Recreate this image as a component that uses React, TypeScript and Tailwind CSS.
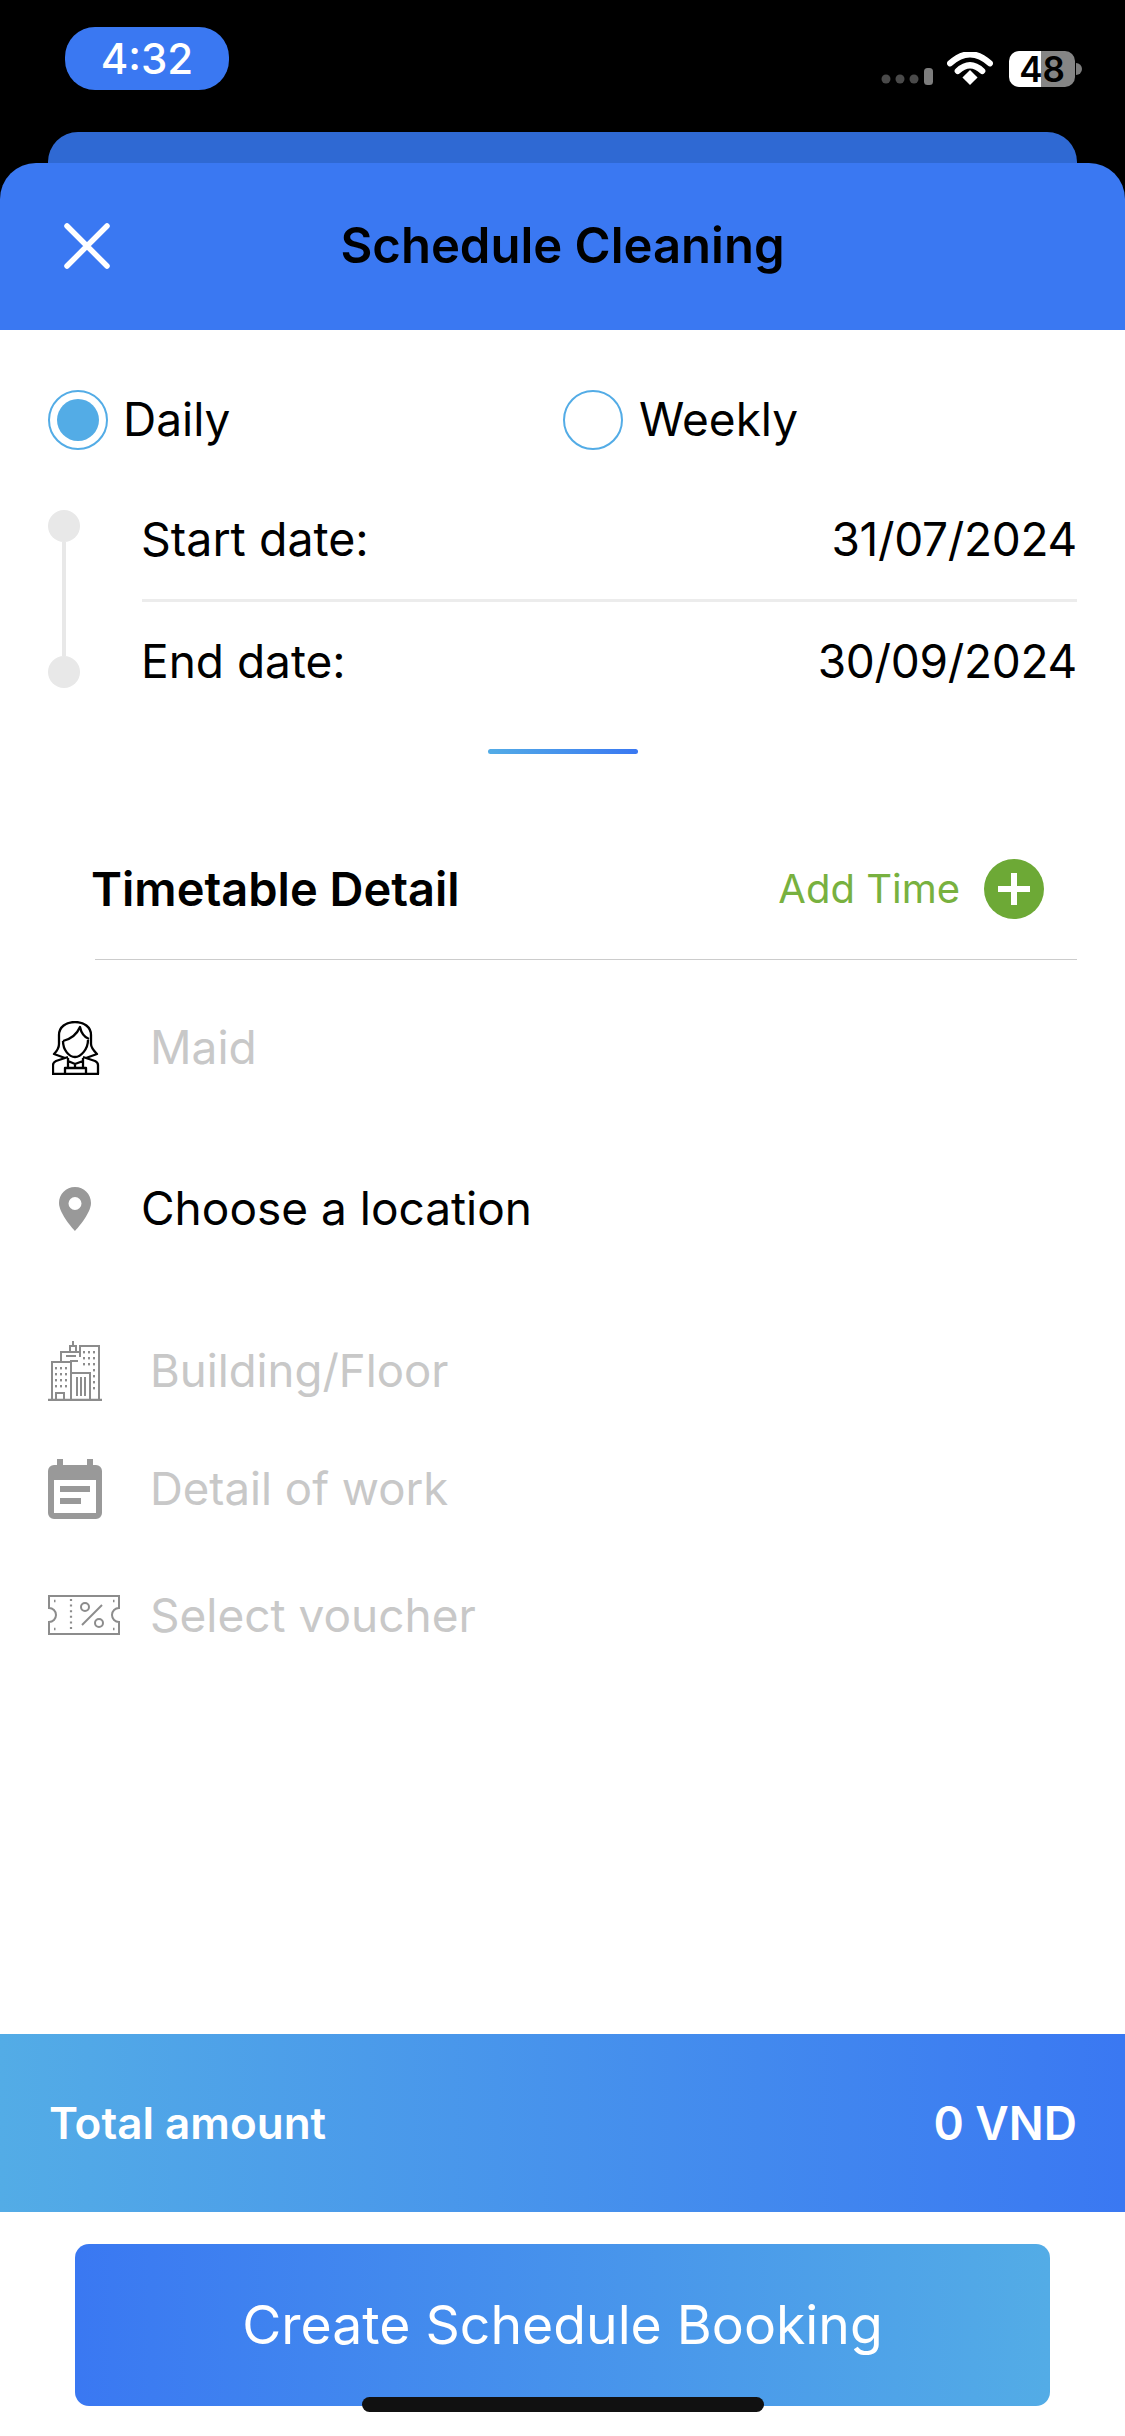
const font = "font-['Inter','Noto_Sans',sans-serif]";

function StatusBar() {
  return (
    <div className="flex h-[132px] items-start justify-between bg-black pl-[65px] pr-[43px]">
      <div className="mt-[27px] flex h-[63px] w-[164px] items-center justify-center rounded-[30px] bg-[#3a78f2] text-[42px] font-medium text-white">
        4:32
      </div>
      <div className="mt-[51px] flex items-center">
        <svg width="52" height="20" viewBox="0 0 52 20" className="mt-[15px]">
          <circle cx="5" cy="12" r="4.5" fill="#4a4a4a" />
          <circle cx="19" cy="12" r="4.5" fill="#4a4a4a" />
          <circle cx="33" cy="12" r="4.5" fill="#4a4a4a" />
          <rect x="43" y="1" width="9" height="17" rx="3.5" fill="#7d7d7d" />
        </svg>
        <svg width="46" height="34" viewBox="0 0 48 36" className="ml-[14px] mr-[16px]">
          <path d="M3 12 Q24 -7 45 12" fill="none" stroke="#fff" strokeWidth="6.5" strokeLinecap="round" />
          <path d="M11 20 Q24 8 37 20" fill="none" stroke="#fff" strokeWidth="6.5" strokeLinecap="round" />
          <path d="M16 27 L24 19 L32 27 L24 35 Z" fill="#fff" />
        </svg>
        <div className="flex h-[36px] w-[66px] items-center justify-center rounded-[10px] bg-[linear-gradient(90deg,#ffffff_48%,#858585_48%)] text-[35px] font-semibold text-black">
          48
        </div>
        <div className="ml-[1px] h-[12px] w-[6px] rounded-r-full bg-[#7d7d7d]" />
      </div>
    </div>
  );
}

function Radio({ checked }: { checked?: boolean }) {
  return (
    <div className="flex h-[60px] w-[60px] shrink-0 items-center justify-center rounded-full border-2 border-[#53ace6]">
      {checked && <div className="h-[42px] w-[42px] rounded-full bg-[#53ace6]" />}
    </div>
  );
}

function MaidIcon() {
  return (
    <svg width="48" height="54" viewBox="0 0 48 54" fill="none" stroke="#000" strokeWidth="2.3" strokeLinejoin="round">
      {/* hair */}
      <path d="M13 37 2 33c3-3 5-6 5-10V14C7 6 14 1 23 1s16 5 16 13v9c0 4 3 7 6 10l-11 4" />
      {/* fringe and face */}
      <path d="M11 20c8-2 14-7 17-14 1 5 4 10 9 12" />
      <path d="M11 20c0 9 6 16 12 16s13-8 13-17" />
      {/* shoulders, collar, apron */}
      <path d="M1 53V44c0-2 1-3 3-4l12-4M46 53V44c0-2-1-3-3-4l-12-4M0 53h47" />
      <path d="M16 37v10M31 37v10M13 53v-6h21v6M16 40l7 3 8-3M23 43v4" />
    </svg>
  );
}

function PinIcon() {
  return (
    <svg width="32" height="44" viewBox="0 0 32 44">
      <path fillRule="evenodd" d="M16 0C7 0 0 7 0 16c0 11 16 28 16 28s16-17 16-28C32 7 25 0 16 0Zm0 10a6.5 6.5 0 1 1 0 13 6.5 6.5 0 0 1 0-13Z" fill="#999999" />
    </svg>
  );
}

function BuildingIcon() {
  const dots: [number, number][] = [];
  for (const y of [27, 33, 39, 45]) for (const x of [8, 13, 18]) dots.push([x, y]);
  for (const y of [11, 17, 23]) for (const x of [36, 41, 46]) dots.push([x, y]);
  for (const y of [29, 35, 41, 47]) dots.push([46, y]);
  return (
    <svg width="54" height="60" viewBox="0 0 54 60" fill="none" stroke="#8c8c8c" strokeWidth="2">
      <path d="M0 59h54" strokeWidth="2.6" />
      <path d="M4 59V21h19v38M13 21V11h19v5M22 11V5h6v6M25 5V0M32 14V5h19v54" />
      <path d="M23 32h19v27H23ZM29 36v19M33 36v19M37 36v19M8 59v-7h8v7M18 15h10M22 20h8" />
      {dots.map(([x, y]) => (
        <rect key={`${x}-${y}`} x={x - 1} y={y - 1} width="2" height="2.4" fill="#8c8c8c" stroke="none" />
      ))}
    </svg>
  );
}

function CalendarIcon() {
  return (
    <svg width="54" height="60" viewBox="0 0 54 60">
      <path fillRule="evenodd" d="M9 0h6v6h24V0h6v6h3a6 6 0 0 1 6 6v42a6 6 0 0 1-6 6H6a6 6 0 0 1-6-6V12a6 6 0 0 1 6-6h3V0Zm-3 21v33h42V21H6Zm6 6h30v6H12v-6Zm0 12h21v6H12v-6Z" fill="#999999" />
    </svg>
  );
}

function VoucherIcon() {
  return (
    <svg width="72" height="40" viewBox="0 0 72 40" fill="none" stroke="#8c8c8c" strokeWidth="2">
      <path d="M1 1h70v12a7 7 0 0 0 0 14v12H1V27a7 7 0 0 0 0-14Z" />
      <path d="M23 4v32" strokeDasharray="2 3.6" strokeWidth="2.2" />
      <circle cx="37" cy="12" r="4" />
      <circle cx="51" cy="28" r="4" />
      <path d="M34 30 54 10" />
      <path d="M6 6h1.5M6 34h1.5M65 6h1.5M65 34h1.5" strokeWidth="2.4" />
    </svg>
  );
}

export default function App() {
  return (
    <div className={`${font} relative flex h-[2436px] w-[1125px] flex-col overflow-hidden bg-white text-black`}>
      <StatusBar />
      <div className="bg-black px-[48px]">
        <div className="h-[31px] rounded-t-[30px] bg-[#2f69d3]" />
      </div>
      <div className="bg-black">
        <header className="flex h-[167px] items-center rounded-t-[36px] bg-[#3a78f2] pb-[2px] pl-[64px] pr-[64px]">
          <svg width="46" height="46" viewBox="0 0 46 46" stroke="#fff" strokeWidth="5.5" strokeLinecap="round" className="shrink-0">
            <path d="M3 3 43 43M43 3 3 43" />
          </svg>
          <h1 className="flex-1 pr-[46px] text-center text-[49px] font-semibold">Schedule Cleaning</h1>
        </header>
      </div>

      <div className="flex items-center pl-[48px] pr-[48px] pt-[55px]">
        <div className="flex w-[515px] items-center gap-[15px]">
          <Radio checked />
          <span className="text-[46px]">Daily</span>
        </div>
        <div className="flex items-center gap-[16px]">
          <Radio />
          <span className="text-[46px]">Weekly</span>
        </div>
      </div>

      <div className="flex pl-[48px] pr-[48px] pt-[56px]">
        <div className="flex w-[94px] shrink-0 flex-col items-start">
          <div className="h-[32px] w-[32px] rounded-full bg-[#e8e8e8]" />
          <div className="ml-[14px] h-[114px] w-[4px] bg-[#e8e8e8]" />
          <div className="h-[32px] w-[32px] rounded-full bg-[#e8e8e8]" />
        </div>
        <div className="-mt-[6px] flex-1 text-[46px]">
          <div className="flex h-[98px] items-start justify-between border-b-[3px] border-[#ececec] pt-[1px]">
            <span className="-ml-[1px] text-[46.5px]">Start date:</span>
            <span className="tracking-[-0.3px]">31/07/2024</span>
          </div>
          <div className="flex items-start justify-between pt-[25px]">
            <span className="-ml-[1px]">End date:</span>
            <span className="tracking-[-0.3px]">30/09/2024</span>
          </div>
        </div>
      </div>

      <div className="flex justify-center pt-[53px]">
        <div className="h-[5px] w-[150px] rounded-full bg-[linear-gradient(90deg,#53ace6,#3a78f2)]" />
      </div>

      <div className="flex items-center justify-between pl-[91px] pr-[81px] pt-[100px]">
        <span className="text-[47px] font-semibold">Timetable Detail</span>
        <div className="flex items-center gap-[24px]">
          <span className="text-[40px] text-[#78b13f]">Add Time</span>
          <div className="flex h-[60px] w-[60px] items-center justify-center rounded-full bg-[#6da936]">
            <svg width="32" height="32" viewBox="0 0 32 32" fill="#fff">
              <path d="M13 0h6v13h13v6H19v13h-6V19H0v-6h13Z" />
            </svg>
          </div>
        </div>
      </div>
      <div className="ml-[95px] mr-[48px] mt-[34px] h-[1.5px] bg-[#cccccc]" />

      <div className="flex items-center pl-[52px] pt-[53px]">
        <div className="w-[98px]"><MaidIcon /></div>
        <span className="text-[46px] text-[#c8c8c8]">Maid</span>
      </div>
      <div className="flex items-center pl-[59px] pt-[92px]">
        <div className="w-[82px]"><PinIcon /></div>
        <span className="text-[46px]">Choose a location</span>
      </div>
      <div className="flex items-center pl-[48px] pt-[94px]">
        <div className="w-[102px]"><BuildingIcon /></div>
        <span className="text-[45.5px] text-[#c8c8c8]">Building/Floor</span>
      </div>
      <div className="flex items-center pl-[48px] pt-[50px]">
        <div className="w-[102px]"><CalendarIcon /></div>
        <span className="text-[45.5px] text-[#c8c8c8]">Detail of work</span>
      </div>
      <div className="flex items-center pl-[48px] pt-[57px]">
        <div className="w-[102px]"><VoucherIcon /></div>
        <span className="text-[46px] text-[#c8c8c8]">Select voucher</span>
      </div>

      <div className="flex-1" />

      <div className="flex h-[178px] items-center justify-between bg-[linear-gradient(90deg,#53ace6,#3a78f2)] pl-[49px] pr-[48px] text-[44px] font-semibold text-white">
        <span>Total amount</span>
        <span className="text-[46px]">0 VND</span>
      </div>
      <div className="flex justify-center pb-[30px] pt-[32px]">
        <button className="flex h-[162px] w-[975px] items-center justify-center rounded-[14px] bg-[linear-gradient(90deg,#3a78f2,#53ace6)] text-[53.5px] text-white">
          Create Schedule Booking
        </button>
      </div>

      <div className="absolute bottom-[24px] left-[362px] h-[15px] w-[402px] rounded-full bg-[#111111]" />
    </div>
  );
}
